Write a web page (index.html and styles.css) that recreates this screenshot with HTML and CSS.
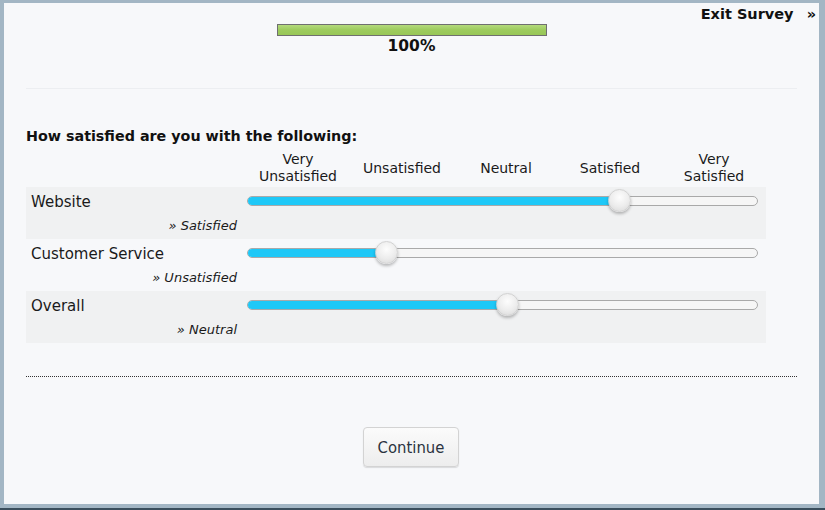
FILE: index.html
```html
<!DOCTYPE html>
<html>
<head>
<meta charset="utf-8">
<link rel="stylesheet" href="styles.css">
</head>
<body>
<div class="page">
  <div class="header">
    <div class="progress">
      <div class="bar"><div class="fill" style="width:100%"></div></div>
      <div class="pct">100%</div>
    </div>
    <a class="exit">Exit Survey <span class="raquo">»</span></a>
  </div>
  <div class="content">
    <div class="sep"></div>
    <h2 class="question">How satisfied are you with the following:</h2>
    <div class="scale">
      <div class="scale-spacer"></div>
      <div class="scale-label">Very<br>Unsatisfied</div>
      <div class="scale-label">Unsatisfied</div>
      <div class="scale-label">Neutral</div>
      <div class="scale-label">Satisfied</div>
      <div class="scale-label">Very<br>Satisfied</div>
    </div>
    <div class="rows">
      <div class="row shaded">
        <div class="labels">
          <div class="item">Website</div>
          <div class="answer">» Satisfied</div>
        </div>
        <div class="slider">
          <div class="track"><div class="range" style="width:373px"></div></div>
          <div class="thumb" style="left:361px"></div>
        </div>
      </div>
      <div class="row">
        <div class="labels">
          <div class="item">Customer Service</div>
          <div class="answer">» Unsatisfied</div>
        </div>
        <div class="slider">
          <div class="track"><div class="range" style="width:140px"></div></div>
          <div class="thumb" style="left:128px"></div>
        </div>
      </div>
      <div class="row shaded">
        <div class="labels">
          <div class="item">Overall</div>
          <div class="answer">» Neutral</div>
        </div>
        <div class="slider">
          <div class="track"><div class="range" style="width:261px"></div></div>
          <div class="thumb" style="left:249px"></div>
        </div>
      </div>
    </div>
    <div class="dotted"></div>
    <div class="actions">
      <button class="continue">Continue</button>
    </div>
  </div>
</div>
</body>
</html>
```

FILE: styles.css
```css
html, body {
  margin: 0;
  padding: 0;
}
body {
  width: 825px;
  height: 510px;
  background: #a3b6c4;
  border-bottom: 2px solid #3a4e5c;
  box-sizing: border-box;
  overflow: hidden;
  font-family: "DejaVu Sans", Verdana, sans-serif;
  color: #111;
}
.page {
  margin: 3px 6px 0 4px;
  height: 501px;
  background: #f7f8fa;
  display: flex;
  flex-direction: column;
}
.header {
  display: grid;
  grid-template-columns: 1fr 270px 1fr;
  align-items: start;
}
.progress {
  grid-column: 2;
  margin-top: 21px;
  display: flex;
  flex-direction: column;
  align-items: center;
}
.bar {
  width: 270px;
  height: 12px;
  box-sizing: border-box;
  border: 1px solid #6f6f6f;
  background: #eee;
}
.fill {
  height: 100%;
  background: linear-gradient(#b4da7c, #9dcb5d 50%, #98c757);
}
.pct {
  font-weight: bold;
  font-size: 15.5px;
  line-height: 18px;
  margin-top: 1px;
  color: #111;
}
.exit {
  grid-column: 3;
  justify-self: end;
  margin-top: 2px;
  margin-right: 3px;
  font-weight: bold;
  font-size: 14.5px;
  line-height: 18px;
  color: #111;
  white-space: nowrap;
}
.raquo {
  margin-left: 8px;
}
.content {
  padding: 0 22px;
  display: flex;
  flex-direction: column;
}
.sep {
  margin-top: 33px;
  height: 1px;
  background: #eceef1;
}
.question {
  margin: 38px 0 0 0;
  font-size: 14.3px;
  line-height: 18px;
  font-weight: bold;
  color: #111;
}
.scale {
  display: grid;
  grid-template-columns: 220px repeat(5, 104px);
  align-items: center;
  font-size: 14px;
  line-height: 17px;
  margin-top: 6px;
}
.scale-label {
  text-align: center;
  color: #1a1a1a;
}
.rows {
  margin-top: 2px;
  width: 740px;
  display: flex;
  flex-direction: column;
}
.row {
  height: 52px;
  display: grid;
  grid-template-columns: 221px 511px;
  column-gap: 0;
}
.row.shaded {
  background: #f0f1f2;
}
.labels {
  display: flex;
  flex-direction: column;
  padding: 6px 10px 0 5px;
}
.item {
  font-size: 15px;
  line-height: 18px;
  color: #1a1a1a;
}
.answer {
  margin-top: 7px;
  text-align: right;
  font-style: italic;
  font-size: 13px;
  line-height: 16px;
  color: #1a1a1a;
}
.slider {
  position: relative;
  padding-top: 9px;
}
.track {
  height: 10px;
  box-sizing: border-box;
  border: 1px solid #a9a9a9;
  border-radius: 5px;
  background: #f6f6f6;
  overflow: hidden;
}
.range {
  height: 100%;
  background: #1ec8f7;
}
.thumb {
  position: absolute;
  top: 2px;
  width: 23px;
  height: 23px;
  border-radius: 50%;
  background: radial-gradient(circle at 50% 35%, #fdfdfd 0%, #ececec 55%, #d6d6d6 100%);
  border: 1px solid #d2d2d2;
  box-sizing: border-box;
  box-shadow: 0 2px 3px rgba(0, 0, 0, 0.25);
}
.dotted {
  margin-top: 33px;
  border-top: 1px dotted #333;
}
.actions {
  display: flex;
  justify-content: center;
  margin-top: 50px;
}
.continue {
  margin-left: -1px;
  width: 96px;
  height: 40px;
  border: 1px solid #d3d3d3;
  border-radius: 4px;
  background: linear-gradient(#fbfbfb, #ededed);
  box-shadow: 0 1px 1px rgba(0, 0, 0, 0.12);
  font-family: "DejaVu Sans Condensed", "DejaVu Sans", sans-serif;
  font-stretch: condensed;
  font-size: 16.5px;
  color: #2b3340;
  padding: 0;
}
```
